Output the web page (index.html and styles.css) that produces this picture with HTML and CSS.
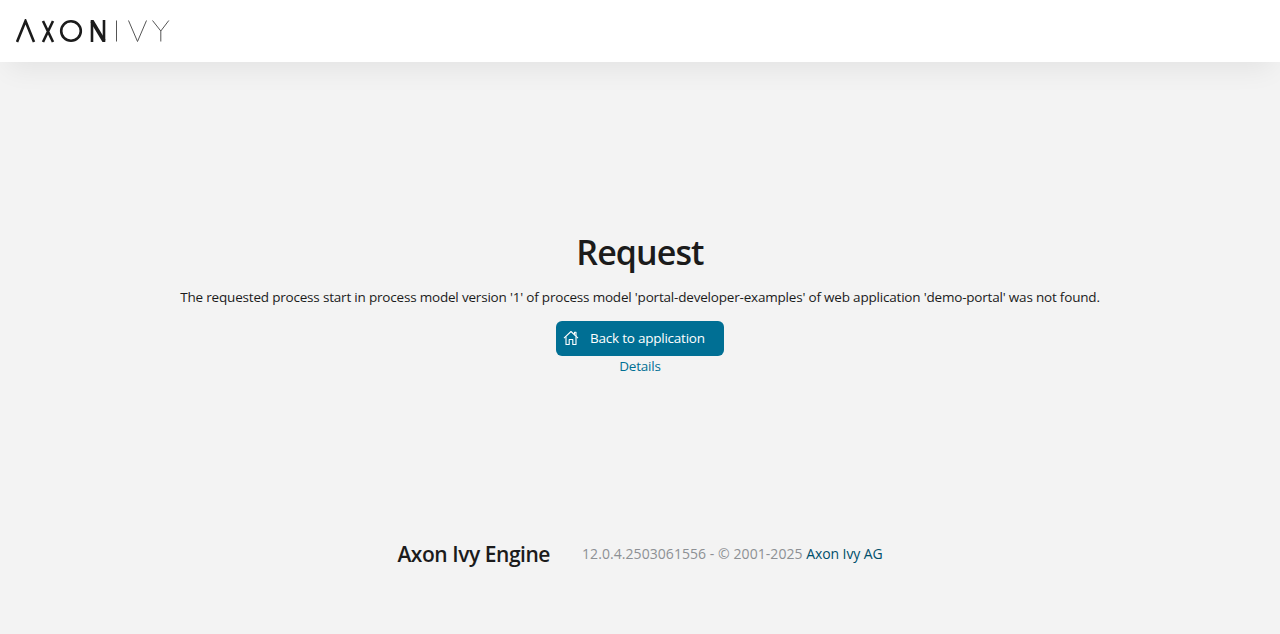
FILE: index.html
```html
<!DOCTYPE html>
<html lang="en">
<head>
<meta charset="utf-8">
<title>Request</title>
<link rel="stylesheet" href="styles.css">
</head>
<body>
<header class="topbar">
  <svg class="logo" width="154" height="24" viewBox="0 0 154 24" fill="none" aria-label="Axon Ivy">
    <g stroke="#1b1b1b" stroke-width="2.6">
      <path d="M1 23 L9.5 2 L18 23"/>
      <path d="M27 2 L37 23 M37 2 L27 23"/>
      <circle cx="55" cy="12" r="9.8"/>
      <path d="M76 23 V1 M88 23 V1"/>
      <path d="M76 2 L88 22" stroke-width="3.6"/>
    </g>
    <g stroke="#555" stroke-width="1">
      <path d="M100.5 1.5 V22.5"/>
      <path d="M112.5 1.5 L121.5 22.5 L130.5 1.5"/>
      <path d="M136.5 1.5 L144.8 12 L152.8 1.5 M144.8 12 V22.5"/>
    </g>
  </svg>
</header>
<main class="content">
  <h1 class="title">Request</h1>
  <p class="message">The requested process start in process model version '1' of process model 'portal-developer-examples' of web application 'demo-portal' was not found.</p>
  <a class="button" href="#">
    <svg class="home" width="16" height="16" viewBox="0 0 16 16" fill="none" stroke="#fff" stroke-width="1.1" stroke-linejoin="round">
      <path d="M1 8.2 L8 1.5 L15 8.2"/>
      <path d="M11.5 4.6 V2.2 H13 V6"/>
      <path d="M3 6.5 V14.5 H6.2 V9.5 H9.8 V14.5 H13 V6.5"/>
    </svg>
    <span>Back to application</span>
  </a>
  <a class="details" href="#">Details</a>
</main>
<footer class="footer">
  <span class="brand">Axon Ivy Engine</span>
  <span class="version">12.0.4.2503061556 - © 2001-2025 <a href="#">Axon Ivy AG</a></span>
</footer>
</body>
</html>
```
FILE: styles.css
```css
* { box-sizing: border-box; }
html, body { height: 100%; }
body {
  margin: 0;
  height: 634px;
  overflow: hidden;
  display: flex;
  flex-direction: column;
  background: #f3f3f3;
  color: #1b1b1b;
  font-family: "Open Sans", "Noto Sans", sans-serif;
}
.topbar {
  height: 62px;
  flex: none;
  display: flex;
  align-items: center;
  padding: 0 16px;
  background: #fff;
  box-shadow: 0 14px 28px -8px rgba(0, 0, 0, 0.07);
}
.logo { display: block; margin-top: -1px; }
.content {
  display: flex;
  flex-direction: column;
  align-items: center;
  padding-top: 168px;
}
.title {
  margin: 0;
  font-size: 34px;
  line-height: 44px;
  font-weight: 600;
  letter-spacing: -0.9px;
  color: #1b1b1b;
}
.message {
  margin: 13px 0 0;
  font-size: 13.5px;
  line-height: 20px;
  letter-spacing: -0.195px;
  color: #1b1b1b;
}
.button {
  margin-top: 14px;
  width: 168px;
  height: 35px;
  display: flex;
  align-items: center;
  gap: 11px;
  padding-left: 7px;
  padding-bottom: 2px;
  border-radius: 6px;
  background: #006f94;
  color: #fff;
  font-size: 13.5px;
  letter-spacing: -0.23px;
  text-decoration: none;
}
.home { flex: none; }
.details {
  font-size: 13.5px;
  line-height: 20px;
  letter-spacing: -0.2px;
  color: #006f94;
  text-decoration: none;
}
.footer {
  margin-top: 163px;
  display: flex;
  justify-content: center;
  align-items: center;
  gap: 32px;
}
.brand {
  font-size: 21px;
  line-height: 30px;
  font-weight: 600;
  letter-spacing: -0.45px;
  color: #1b1b1b;
}
.version {
  font-size: 14px;
  line-height: 20px;
  letter-spacing: 0.06px;
  color: #8d9094;
}
.version a { color: #004f6b; letter-spacing: -0.1px; text-decoration: none; }
```
